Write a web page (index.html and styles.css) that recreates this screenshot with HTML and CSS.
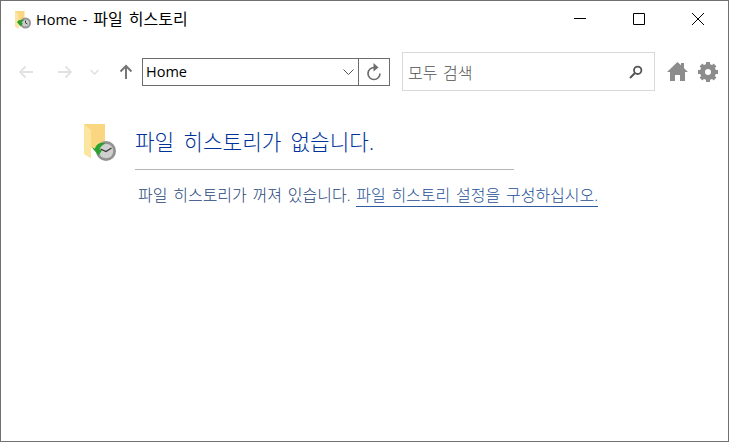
FILE: index.html
```html
<!DOCTYPE html>
<html lang="ko">
<head>
  <meta charset="UTF-8" />
  <title>Home - 파일 히스토리</title>
  <link rel="stylesheet" href="styles.css">
</head>
<body>
  <div class="window">
    <header class="titlebar">
      <svg class="app-icon" width="18" height="20" viewBox="0 0 18 20">
        <path d="M1 1h9.500v10l-6 2v5.500l-3.500-2z" fill="#f9d67f"/>
        <path d="M1 1l3.500 3v14.500l-3.500-2z" fill="#fce59f"/>
        <circle cx="11.500" cy="13" r="5.500" fill="#959595"/>
        <circle cx="11.500" cy="13" r="3.600" fill="#cdcdcd"/>
        <path d="M11.500 10.500V13l2 1" stroke="#444" fill="none"/>
        <path d="M3 12l3.500 4.500 2.500-3-1.500-.5c.5-1.500 1.500-2.500 3-3-3-.5-6.500 0-7.500 2z" fill="#2c9e2c"/>
      </svg>
      <span class="title">Home - <span class="title-ko">파일 히스토리</span></span>
      <div class="caption">
        <button class="cap-btn">
          <svg width="12" height="12" viewBox="0 0 12 12"><path d="M0 5.500h12" stroke="#000" fill="none"/></svg>
        </button>
        <button class="cap-btn">
          <svg width="12" height="12" viewBox="0 0 12 12"><path d="M.5.500h11v11H.5z" stroke="#000" fill="none"/></svg>
        </button>
        <button class="cap-btn">
          <svg width="12" height="12" viewBox="0 0 12 12"><path d="M0 0l12 12M12 0L0 12" stroke="#000" fill="none"/></svg>
        </button>
      </div>
    </header>

    <div class="toolbar">
      <svg class="nav-back" width="16" height="14" viewBox="0 0 16 14"><path d="M15 7H2M7.500 1.500L2 7l5.500 5.500" stroke="#e2e2e2" stroke-width="1.800" fill="none"/></svg>
      <svg class="nav-forward" width="16" height="14" viewBox="0 0 16 14"><path d="M1 7h13M8.500 1.500L14 7l-5.500 5.500" stroke="#e2e2e2" stroke-width="1.800" fill="none"/></svg>
      <svg class="nav-recent" width="9" height="6" viewBox="0 0 9 6"><path d="M.5 1l4 4 4-4" stroke="#e0e0e0" stroke-width="1.500" fill="none"/></svg>
      <svg class="nav-up" width="14" height="15" viewBox="0 0 14 15"><path d="M7 15V2M1.500 7.500L7 2l5.500 5.500" stroke="#767676" stroke-width="2" fill="none"/></svg>

      <div class="address">
        <span class="address-text">Home</span>
        <svg width="11" height="6" viewBox="0 0 11 6"><path d="M.5.500l5 5 5-5" stroke="#555" fill="none"/></svg>
      </div>
      <button class="refresh">
        <svg width="16" height="18" viewBox="0 0 16 18"><path d="M8 4.500a6 6 0 1 0 6 6" stroke="#6d6d6d" stroke-width="1.700" fill="none"/><path d="M7.500 0l5 4.500-5 4z" fill="#6d6d6d"/></svg>
      </button>

      <div class="search">
        <span class="search-text">모두 검색</span>
        <svg width="14" height="14" viewBox="0 0 14 14"><circle cx="8.700" cy="5.300" r="3.700" stroke="#555" stroke-width="1.800" fill="none"/><path d="M6 8l-5 5" stroke="#555" stroke-width="2" fill="none"/></svg>
      </div>

      <svg class="tool-home" width="21" height="19" viewBox="0 0 21 19"><path d="M10.500 0L14 3.300V1h3v5.200L21 10h-3v9h-5v-6H8v6H3v-9H0z" fill="#8c8c8c"/></svg>
      <svg class="tool-gear" width="20" height="20" viewBox="0 0 20 20">
        <circle cx="10" cy="10" r="5.500" fill="none" stroke="#8c8c8c" stroke-width="5"/>
        <path d="M10 0v4M10 16v4M0 10h4M16 10h4M3 3l2.800 2.800M14.200 14.200L17 17M17 3l-2.800 2.800M5.800 14.200L3 17" stroke="#8c8c8c" stroke-width="4"/>
      </svg>
    </div>

    <main class="content">
      <svg class="hero-icon" width="34" height="38" viewBox="0 0 34 38">
        <path d="M1 1h21v24H8v10l-7-4z" fill="#f9d67f"/>
        <path d="M1 1l7 6v28l-7-4z" fill="#fce59f"/>
        <circle cx="23" cy="28" r="10" fill="#919191"/>
        <circle cx="23" cy="28" r="7.300" fill="#cfcfcf"/>
        <path d="M17.500 26l5.500 2.500 5.500-3.500" stroke="#333" stroke-width="1.200" fill="none"/>
        <path d="M9 24.500l6.500 8 3.500-5-2.500-1c1-3 2.500-4.500 6-6-5.500-1.500-9.500.5-10.500 5z" fill="#2ba12f"/>
      </svg>
      <div class="message">
        <h1>파일 히스토리가 없습니다.</h1>
        <p>파일 히스토리가 꺼져 있습니다. <a href="#">파일 히스토리 설정을 구성하십시오.</a></p>
      </div>
    </main>
  </div>
</body>
</html>
```

FILE: styles.css
```css
* {
  box-sizing: border-box;
  margin: 0;
  padding: 0;
}

html, body {
  width: 729px;
  height: 442px;
  overflow: hidden;
}

body {
  font-family: 'Open Sans', 'Noto Sans CJK KR', sans-serif;
  background: #fff;
  color: #000;
}

.window {
  width: 729px;
  height: 442px;
  border: 1px solid #707070;
  background: #fff;
}

.titlebar {
  display: flex;
  align-items: center;
  height: 37px;
  padding-left: 13px;
}

.app-icon {
  margin-right: 4px;
}

.title {
  font-size: 14.5px;
  word-spacing: 2px;
  flex: 1;
  padding-bottom: 3px;
}

.title-ko {
  font-size: 16px;
}

.caption {
  display: flex;
  margin-right: 1px;
}

.cap-btn {
  width: 59px;
  height: 37px;
  padding-bottom: 2px;
  border: none;
  background: none;
  display: flex;
  align-items: center;
  justify-content: center;
}

.toolbar {
  display: flex;
  align-items: center;
  height: 41px;
  margin-top: 13px;
  padding-left: 17px;
}

.nav-forward {
  margin-left: 23px;
}

.nav-recent {
  margin-left: 17px;
}

.nav-up {
  margin-left: 20px;
}

.address {
  display: flex;
  align-items: center;
  justify-content: space-between;
  width: 217px;
  height: 28px;
  margin-left: 9px;
  padding: 0 4px 0 3px;
  border: 1px solid #6d6d6d;
}

.address-text {
  font-size: 14.5px;
}

.refresh {
  display: flex;
  align-items: center;
  justify-content: center;
  width: 31px;
  height: 28px;
  border: 1px solid #6d6d6d;
  border-left: none;
  background: #fff;
}

.search {
  display: flex;
  align-items: center;
  justify-content: space-between;
  width: 253px;
  height: 39px;
  margin-left: 12px;
  padding: 0 11px 0 5px;
  border: 1px solid #d9d9d9;
}

.search-text {
  font-size: 16px;
  word-spacing: 1.5px;
  font-weight: 300;
  color: #505050;
}

.tool-home {
  margin-left: 12px;
}

.tool-gear {
  margin-left: 10px;
}

.content {
  display: flex;
  padding: 31px 0 0 82px;
}

.hero-icon {
  flex: none;
  margin-right: 18px;
}

.message {
  width: 379px;
}

h1 {
  font-size: 21.33px;
  font-weight: 300;
  word-spacing: 3.5px;
  line-height: 30px;
  padding: 4px 0 12px;
  color: #003399;
  border-bottom: 1px solid #b5b5b5;
  white-space: nowrap;
}

p {
  padding: 14px 0 0 3px;
  font-size: 16px;
  font-weight: 300;
  word-spacing: 1.6px;
  line-height: 22px;
  color: #25447a;
  white-space: nowrap;
}

a {
  color: #234f96;
  text-decoration: none;
  border-bottom: 1px solid #2e5aa0;
}
```
